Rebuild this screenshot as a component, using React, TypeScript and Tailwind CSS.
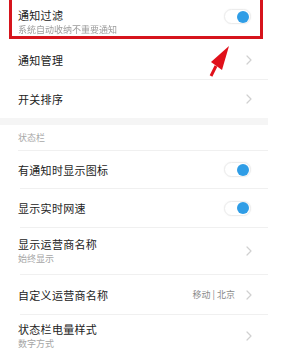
import React from 'react';

const Chevron = () => (
    <svg width="6" height="10" viewBox="0 0 6 10" fill="none" stroke="#d0d0d0" strokeWidth="1.2" strokeLinecap="round" strokeLinejoin="round">
        <polyline points="1 1 5 5 1 9"></polyline>
    </svg>
);

const Toggle = () => (
    <div className="w-[27px] h-[15px] rounded-full bg-white border border-[#ececec] shadow-[0_0_2px_rgba(0,0,0,0.06)] flex items-center justify-end pr-[1px]">
        <div className="w-[12px] h-[12px] rounded-full bg-[#2f9de6]" />
    </div>
);

const Row = ({ title, sub, right, h }: { title: string; sub?: string; right: React.ReactNode; h: string }) => (
    <div className={`flex items-center justify-between pl-[18px] pr-[16px] ${h}`}>
        <div className="flex flex-col">
            <span className="text-[11px] leading-[14px] tracking-[0.3px] text-[#222]">{title}</span>
            {sub && <span className="text-[9px] leading-[13px] text-[#a6a6a6] mt-[1px]">{sub}</span>}
        </div>
        {right}
    </div>
);

const Divider = () => <div className="h-px bg-[#f0f0f0] ml-[20px]" />;

export default function App() {
    return (
        <div className="relative w-[296px] h-[356px] bg-white overflow-hidden" style={{ fontFamily: '"Noto Sans CJK SC", "Noto Sans", sans-serif' }}>
            <div className="w-[268px] flex flex-col">
                <div className="flex items-center justify-between pl-[18px] pr-[16px] h-[40px] pt-[3px]">
                    <div className="flex flex-col">
                        <span className="text-[11px] leading-[14px] tracking-[0.3px] text-[#222]">通知过滤</span>
                        <span className="text-[9px] leading-[13px] text-[#9c9c9c] mt-[1px] blur-[0.3px]">系统自动收纳不重要通知</span>
                    </div>
                    <div className="-mt-[10px] mr-[1px]"><Toggle /></div>
                </div>
                <Row title="通知管理" h="h-[39px]" right={<Chevron />} />
                <Divider />
                <Row title="开关排序" h="h-[38px]" right={<Chevron />} />
                <div className="h-[7px] bg-[#f5f5f5]" />
                <div className="h-[25px] flex items-center pl-[18px]">
                    <span className="text-[9px] text-[#a8a8a8]">状态栏</span>
                </div>
                <div className="h-px bg-[#f0f0f0] ml-[18px]" />
                <Row title="有通知时显示图标" h="h-[37px]" right={<div className="mr-[1px]"><Toggle /></div>} />
                <Divider />
                <Row title="显示实时网速" h="h-[38px]" right={<div className="mr-[1px]"><Toggle /></div>} />
                <Divider />
                <Row title="显示运营商名称" sub="始终显示" h="h-[46px]" right={<Chevron />} />
                <Divider />
                <Row
                    title="自定义运营商名称"
                    h="h-[39px]"
                    right={
                        <div className="flex items-center gap-[11px]">
                            <span className="text-[9px] text-[#8a8a8a]">移动 | 北京</span>
                            <Chevron />
                        </div>
                    }
                />
                <Divider />
                <Row title="状态栏电量样式" sub="数字方式" h="h-[42px]" right={<Chevron />} />
            </div>

            <div className="absolute left-[9px] top-[-5px] w-[254px] h-[44px] border-[3px] border-[#d6141c]" />
            <svg className="absolute left-[205px] top-[44px]" width="30" height="35" viewBox="0 0 30 35">
                <polygon points="24,2 6,18 17,26" fill="#e0101a" />
                <line x1="11" y1="22" x2="6" y2="32" stroke="#e0101a" strokeWidth="3" />
            </svg>
        </div>
    );
}
